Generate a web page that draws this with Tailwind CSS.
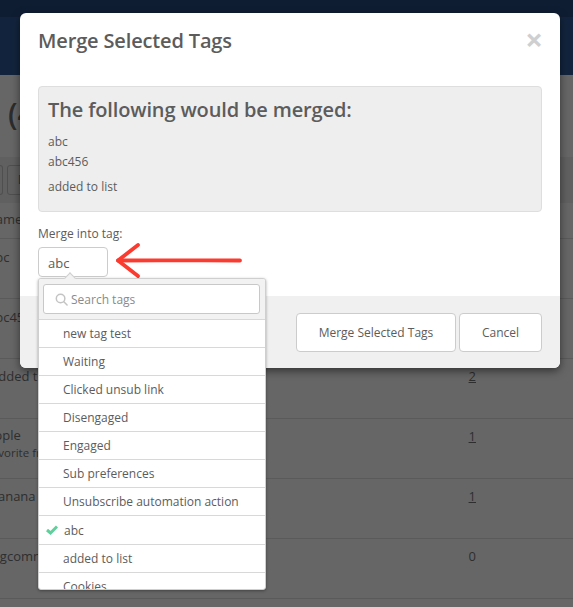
<!DOCTYPE html>
<html lang="en">
<head>
  <meta charset="UTF-8">
  <script src="https://cdn.jsdelivr.net/npm/@tailwindcss/browser@4"></script>
  <title>Merge Selected Tags</title>
</head>
<body class="font-['Open_Sans',sans-serif]">
  <div class="relative w-[573px] h-[607px] overflow-hidden bg-[#666666] text-[#2e2e2e]">

    <!-- page behind the overlay -->
    <div class="h-[75px] bg-[#12243d] border-t-[17px] border-[#0f1d33]"></div>
    <div class="h-[82px] pl-2 pt-[17px] text-[30px] font-semibold leading-[44px] text-[#2c2c2c]">(4</div>
    <div class="h-[46px] bg-[#606060] flex gap-1 pt-[8px]">
      <div class="w-[3px] h-[30px] border border-l-0 border-[#4f4f4f] rounded-r-[3px]"></div>
      <div class="w-[30px] h-[30px] border border-[#4f4f4f] rounded-[3px] pl-[10px] text-[12px] leading-[28px]">D</div>
    </div>
    <div class="h-[36px] border-b border-[#5a5a5a] pt-[7px] text-[13px] -ml-[14px]">Name</div>
    <div class="flex flex-col text-[13px]">
      <div class="h-[60px] border-b border-[#5a5a5a] pt-[9px] pl-[12px] -ml-[24px]">abc</div>
      <div class="h-[60px] border-b border-[#5a5a5a] pt-[9px] pl-[12px] -ml-[24px]">abc456</div>
      <div class="h-[60px] border-b border-[#5a5a5a] pt-[8px] flex justify-between pr-[97px]">
        <span class="-ml-[9px]">added to list</span><span class="underline">2</span>
      </div>
      <div class="h-[60px] border-b border-[#5a5a5a] pt-[8px] flex justify-between pr-[97px]">
        <div class="-ml-[14px] leading-[17px]">Apple<br><span class="text-[11.5px]">Favorite fruit</span></div><span class="underline">1</span>
      </div>
      <div class="h-[60px] border-b border-[#5a5a5a] pt-[8px] flex justify-between pr-[97px]">
        <span class="-ml-[10px]">banana</span><span class="underline">1</span>
      </div>
      <div class="h-[60px] border-b border-[#5a5a5a] pt-[8px] flex justify-between pr-[97px]">
        <span class="-ml-[12px]">tagcommon</span><span>0</span>
      </div>
    </div>

    <!-- modal -->
    <div class="absolute left-[20px] top-[13px] w-[540px] h-[355px] bg-white rounded-[6px] shadow-[0_3px_9px_rgba(0,0,0,0.5)] flex flex-col">
      <div class="flex justify-between items-start pl-[18px] pr-[17px] h-[73px] pt-[13px]">
        <h3 class="text-[20px] leading-[30px] font-semibold tracking-[-0.15px] text-[#5c5c5c]">Merge Selected Tags</h3>
        <span class="text-[31px] leading-[26px] font-bold text-[#cfcfcf]">×</span>
      </div>
      <div class="flex-1 px-[18px]">
        <div class="h-[126px] bg-[#eeeeee] border border-[#dedede] rounded-[4px] pl-[9px] pt-[9px] text-[#5c5c5c]">
          <h4 class="text-[20px] leading-[28px] font-semibold tracking-[-0.14px]">The following would be merged:</h4>
          <p class="text-[12px] leading-[20px] mt-[8px]">abc</p>
          <p class="text-[12px] leading-[20px]">abc456</p>
          <p class="text-[12px] leading-[20px] mt-[5px]">added to list</p>
        </div>
        <label class="block mt-[13px] text-[12px] leading-[18px] font-medium text-[#5c5c5c]">Merge into tag:</label>
        <div class="mt-[4px] w-[70px] h-[30px] border border-[#cccccc] rounded-[4px] pl-[9px] text-[13px] leading-[31px] text-[#5c5c5c]">abc</div>
      </div>
      <div class="h-[72px] bg-[#f0f0f0] rounded-b-[6px] flex justify-end gap-[3px] pt-[17px] pr-[18px] text-[12px] text-[#5c5c5c]">
        <button class="w-[160px] h-[39px] bg-white border border-[#cccccc] rounded-[4px] font-medium">Merge Selected Tags</button>
        <button class="w-[83px] h-[39px] bg-white border border-[#cccccc] rounded-[4px] font-medium">Cancel</button>
      </div>
    </div>

    <!-- red annotation arrow -->
    <svg class="absolute left-[115px] top-[243px]" width="130" height="36" viewBox="0 0 130 36" fill="none" stroke="#fb3b30" stroke-width="3.8" stroke-linecap="round" stroke-linejoin="round">
      <path d="M23 2 L3 17.5 L23 33"/>
      <path d="M3 17.5 C40 17 90 17.5 125 17.5"/>
    </svg>

    <!-- tag dropdown -->
    <div class="absolute left-[38px] top-[278px] w-[228px] h-[312px] bg-white border border-[#cfcfcf] rounded-[3px] shadow-[0_1px_3px_rgba(0,0,0,0.35)] overflow-hidden text-[#5c5c5c]">
      <div class="h-[40px] bg-[#f2f2f2] pl-[4px] pr-[5px] pt-[5px]">
        <div class="h-[30px] bg-white border border-[#c8c8c8] rounded-[3px] flex items-center gap-[3px] pl-[11px]">
          <svg width="13" height="13" viewBox="0 0 14 14" fill="none" stroke="#c4c4c4" stroke-width="1.6" stroke-linecap="round"><circle cx="6" cy="6" r="4.6"/><path d="M9.5 9.5 L13 13"/></svg>
          <span class="text-[12px] leading-[30px] pt-[1px] text-[#8a8a8a]">Search tags</span>
        </div>
      </div>
      <ul class="text-[12px] leading-[27px] font-medium">
        <li class="h-[28px] border-t border-[#d8d8d8] pl-[24px]">new tag test</li>
        <li class="h-[28px] border-t border-[#d8d8d8] pl-[24px]">Waiting</li>
        <li class="h-[28px] border-t border-[#d8d8d8] pl-[24px]">Clicked unsub link</li>
        <li class="h-[28px] border-t border-[#d8d8d8] pl-[24px]">Disengaged</li>
        <li class="h-[28px] border-t border-[#d8d8d8] pl-[24px]">Engaged</li>
        <li class="h-[28px] border-t border-[#d8d8d8] pl-[24px]">Sub preferences</li>
        <li class="h-[28px] border-t border-[#d8d8d8] pl-[24px]">Unsubscribe automation action</li>
        <li class="h-[29px] border-t border-[#d8d8d8] pl-[7px] flex items-center gap-[6px]">
          <svg width="12" height="10" viewBox="0 0 12 10" fill="none" stroke="#5fcf9c" stroke-width="3"><path d="M1 5 L4.5 8 L11 1.5"/></svg>
          <span>abc</span>
        </li>
        <li class="h-[28px] border-t border-[#d8d8d8] pl-[24px]">added to list</li>
        <li class="h-[28px] border-t border-[#d8d8d8] pl-[24px]">Cookies</li>
      </ul>
    </div>
    <!-- little caret above the dropdown -->
    <div class="absolute left-[66px] top-[274px] w-[8px] h-[8px] rotate-45 bg-[#f2f2f2] border-l border-t border-[#cfcfcf]"></div>
  </div>
</body>
</html>
